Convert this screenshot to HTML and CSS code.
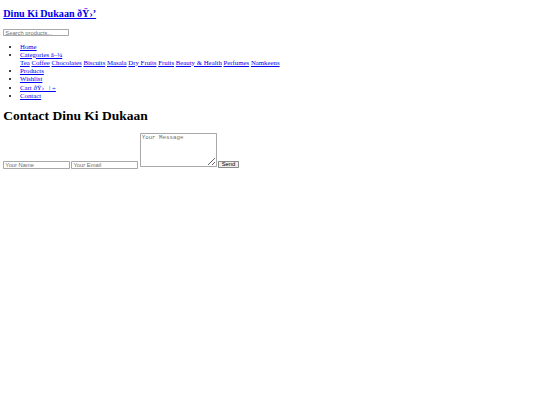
FILE: index.html
```html
<!DOCTYPE html>
<html>
<head>
<meta charset="utf-8">
<title>Contact - Dinu Ki Dukaan</title>
<link rel="stylesheet" href="styles.css">
</head>
<body class="body">
<header class="site-header">
  <h2 class="logo"><a href="#">Dinu Ki Dukaan ðŸ›’</a></h2>
  <input class="search" type="text" placeholder="Search products...">
  <nav class="nav">
    <ul class="menu">
      <li><a href="#">Home</a></li>
      <li><a href="#">Categories â–¼</a>
        <div class="dropdown"><a href="#">Tea</a> <a href="#">Coffee</a> <a href="#">Chocolates</a> <a href="#">Biscuits</a> <a href="#">Masala</a> <a href="#">Dry Fruits</a> <a href="#">Fruits</a> <a href="#">Beauty &amp; Health</a> <a href="#">Perfumes</a> <a href="#">Namkeens</a></div>
      </li>
      <li><a href="#">Products</a></li>
      <li><a href="#">Wishlist</a></li>
      <li class="cart-item"><a href="#">Cart ðŸ›&nbsp;&nbsp; ǀ ÷</a></li>
      <li><a href="#">Contact</a></li>
    </ul>
  </nav>
</header>
<main class="main">
  <h1 class="title">Contact Dinu Ki Dukaan</h1>
  <form class="contact-form">
    <input class="field" type="text" placeholder="Your Name">
    <input class="field" type="email" placeholder="Your Email">
    <textarea class="message" placeholder="Your Message"></textarea>
    <button class="send" type="button">Send</button>
  </form>
</main>
</body>
</html>
```
FILE: styles.css
```css
.body {
  margin: 0;
  padding: 3.3px;
  font-family: "Liberation Serif", serif;
  font-size: 6.8px;
  background: #fff;
  color: #000;
}
a {
  color: #0000ee;
}
.logo {
  margin: 4.6px 0 0;
  font-size: 10.1px;
  line-height: 11.5px;
  font-weight: bold;
}
.search {
  display: block;
  margin: 9.4px 0 0;
  box-sizing: border-box;
  width: 66px;
  height: 7.6px;
  padding: 0 1px;
  border: 0.8px solid #a8a8a8;
  border-radius: 0.8px;
  font-family: "Liberation Sans", sans-serif;
  font-size: 5.8px;
  background: #fff;
}
.search::placeholder, .field::placeholder, .message::placeholder {
  color: #6e6e6e;
}
.menu {
  margin: 6.6px 0 0;
  padding-left: 16.7px;
  line-height: 7.9px;
}
.cart-item {
  line-height: 9px;
}
.title {
  margin: 8.6px 0 0;
  font-size: 13.5px;
  line-height: 15.4px;
  font-weight: bold;
}
.contact-form {
  display: flex;
  align-items: flex-end;
  gap: 1.7px;
  margin-top: 9.6px;
}
.field {
  box-sizing: border-box;
  width: 66.5px;
  height: 7.6px;
  padding: 0 1px;
  border: 0.8px solid #a8a8a8;
  border-radius: 0.8px;
  font-family: "Liberation Sans", sans-serif;
  font-size: 5.8px;
  background: #fff;
}
.message {
  box-sizing: border-box;
  width: 77px;
  height: 34px;
  margin-bottom: 1.6px;
  padding: 0.5px 1px;
  border: 0.8px solid #a8a8a8;
  border-radius: 0.8px;
  font-family: "Liberation Mono", monospace;
  font-size: 5.8px;
  line-height: 6.6px;
  background: #fff;
  resize: both;
}
.send {
  box-sizing: border-box;
  height: 7px;
  margin-bottom: 0.3px;
  padding: 0 2.4px;
  border: 0.8px solid #8a8a8a;
  border-radius: 0.8px;
  background: #efefef;
  font-family: "Liberation Sans", sans-serif;
  font-size: 5.8px;
  line-height: 5px;
  color: #000;
}
```
